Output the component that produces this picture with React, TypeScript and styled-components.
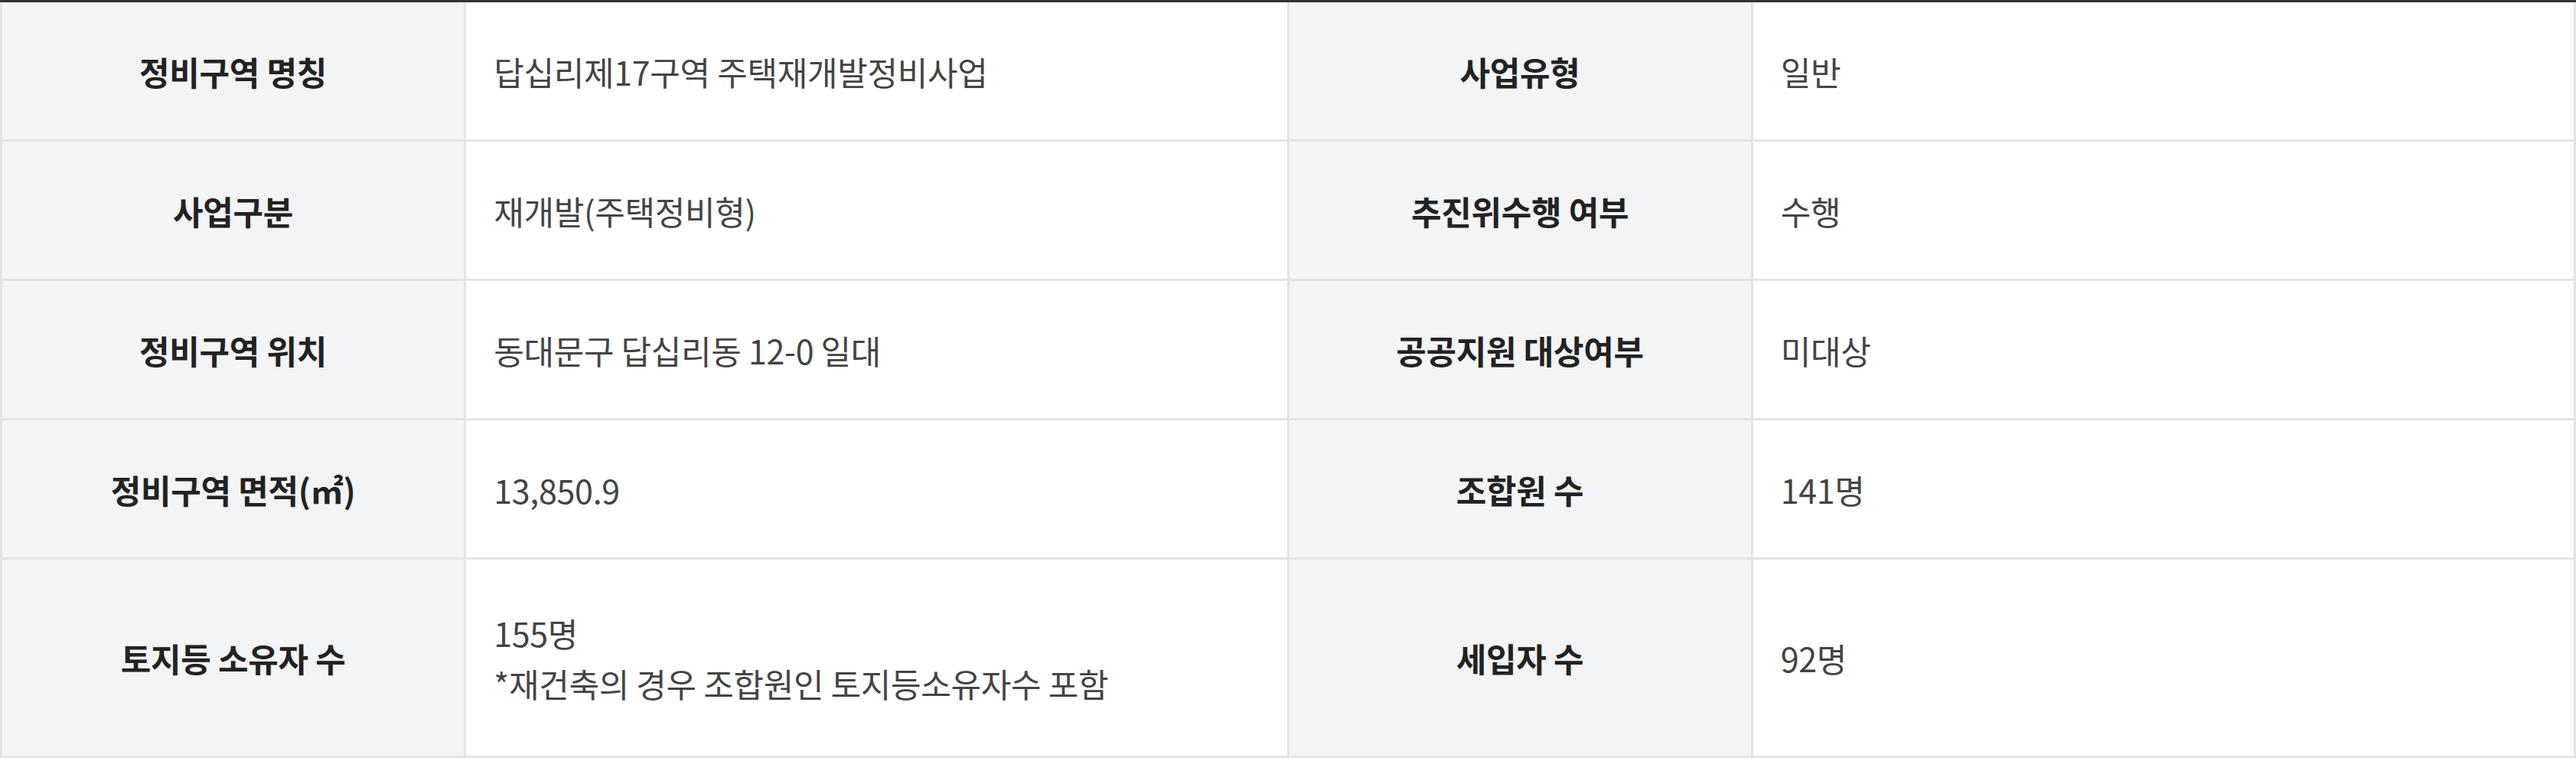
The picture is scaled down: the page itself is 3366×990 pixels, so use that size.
import React from 'react';
import styled, { createGlobalStyle } from 'styled-components';

const GlobalStyle = createGlobalStyle`
  html, body {
    margin: 0;
    padding: 0;
    background: #ffffff;
  }

  body {
    font-family: "Noto Sans CJK KR", "Noto Sans", sans-serif;
  }
`;

type InfoItem = {
  label: string;
  value: string[];
};

type InfoRow = [InfoItem, InfoItem];

const rows: InfoRow[] = [
  [
    { label: '정비구역 명칭', value: ['답십리제17구역 주택재개발정비사업'] },
    { label: '사업유형', value: ['일반'] }
  ],
  [
    { label: '사업구분', value: ['재개발(주택정비형)'] },
    { label: '추진위수행 여부', value: ['수행'] }
  ],
  [
    { label: '정비구역 위치', value: ['동대문구 답십리동 12-0 일대'] },
    { label: '공공지원 대상여부', value: ['미대상'] }
  ],
  [
    { label: '정비구역 면적(㎡)', value: ['13,850.9'] },
    { label: '조합원 수', value: ['141명'] }
  ],
  [
    { label: '토지등 소유자 수', value: ['155명', '*재건축의 경우 조합원인 토지등소유자수 포함'] },
    { label: '세입자 수', value: ['92명'] }
  ]
];

const Table = styled.div`
  display: grid;
  grid-template-columns: 18fr 32fr 18fr 32fr;
  gap: 3px;
  padding: 0 3px 3px;
  background: #e3e4e6;
  border-top: 3px solid #333333;
  font-size: 43px;
  letter-spacing: -0.3px;
`;

const Cell = styled.div<{ $tall?: boolean }>`
  display: flex;
  flex-direction: column;
  justify-content: center;
  min-height: ${({ $tall }) => ($tall ? '256px' : '179px')};
  box-sizing: border-box;
  line-height: 66px;
`;

const LabelCell = styled(Cell)`
  align-items: center;
  background: #f3f4f6;
  color: #222222;
  font-weight: 700;
`;

const ValueCell = styled(Cell)`
  align-items: flex-start;
  padding: 0 36px;
  background: #ffffff;
  color: #444444;
  font-weight: 400;
`;

const ValueLine = styled.div`
  white-space: nowrap;
`;

export default function App() {
  return (
    <>
      <GlobalStyle />
      <Table>
        {rows.map((row, i) => {
          const tall = row.some((item) => item.value.length > 1);
          return row.map((item) => (
            <React.Fragment key={`${i}-${item.label}`}>
              <LabelCell $tall={tall}>{item.label}</LabelCell>
              <ValueCell $tall={tall}>
                {item.value.map((line) => (
                  <ValueLine key={line}>{line}</ValueLine>
                ))}
              </ValueCell>
            </React.Fragment>
          ));
        })}
      </Table>
    </>
  );
}
